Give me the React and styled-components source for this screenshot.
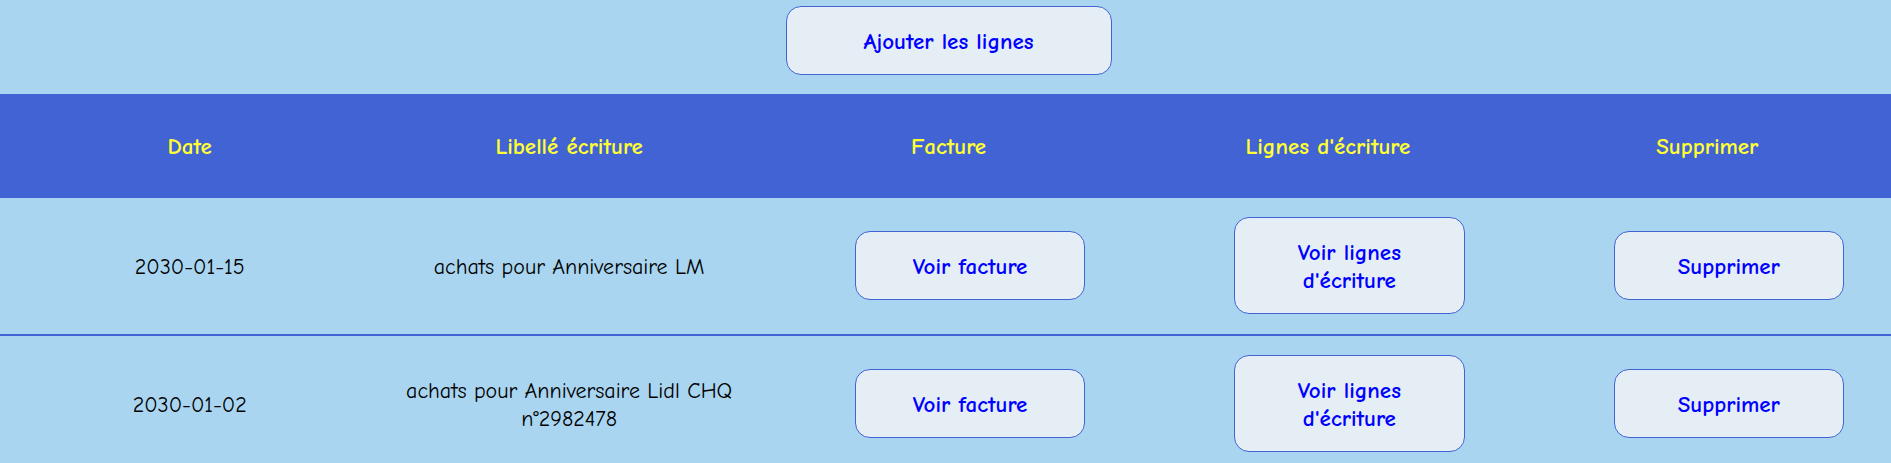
import React from "react";
import styled, { createGlobalStyle } from "styled-components";

const GlobalStyle = createGlobalStyle`
  *, *::before, *::after { box-sizing: border-box; }
  body {
    margin: 0;
    overflow: hidden;
    background: #a9d5f0;
    color: #000;
    font-family: "Comic Sans MS", "Comic Neue", "Noto Sans", sans-serif;
    font-size: 22px;
    line-height: 28px;
  }
`;

const Page = styled.main`
  width: calc(100% + 6px);
  padding-top: 6px;
`;

const Toolbar = styled.div`
  display: flex;
  justify-content: center;
  margin-bottom: 19px;
`;

const Button = styled.button`
  display: block;
  width: ${({ $width }) => $width || "100%"};
  padding: 21px 40px 18px;
  border: 1px solid #4263d4;
  border-radius: 15px;
  background: #e5eef5;
  color: #0000ff;
  font: inherit;
  font-size: 23px;
  font-weight: 700;
  text-align: center;
  cursor: pointer;
`;

const Table = styled.table`
  width: 100%;
  table-layout: fixed;
  border-collapse: separate;
  border-spacing: 0;
  text-align: center;
`;

const HeadCell = styled.th`
  padding: 39px 20px 37px;
  background: #4263d4;
  color: #ffff33;
  font-size: 23px;
  font-weight: 700;
`;

const Cell = styled.td`
  padding: 20px 20px 18px;
  border-bottom: 2px solid #4263d4;
`;

const ActionCell = styled(Cell)`
  padding: 19px 53px 20px 96px;
`;

const columns = ["Date", "Libellé écriture", "Facture", "Lignes d'écriture", "Supprimer"];

const entries = [
  { date: "2030-01-15", label: "achats pour Anniversaire LM" },
  { date: "2030-01-02", label: "achats pour Anniversaire Lidl CHQ n°2982478" },
];

export default function App() {
  return (
    <>
      <GlobalStyle />
      <Page>
        <Toolbar>
          <Button type="button" $width="326px">Ajouter les lignes</Button>
        </Toolbar>
        <Table>
          <thead>
            <tr>
              {columns.map((name) => (
                <HeadCell key={name} scope="col">{name}</HeadCell>
              ))}
            </tr>
          </thead>
          <tbody>
            {entries.map(({ date, label }) => (
              <tr key={date}>
                <Cell>{date}</Cell>
                <Cell>{label}</Cell>
                <ActionCell><Button type="button">Voir facture</Button></ActionCell>
                <ActionCell><Button type="button">Voir lignes d'écriture</Button></ActionCell>
                <ActionCell><Button type="button">Supprimer</Button></ActionCell>
              </tr>
            ))}
          </tbody>
        </Table>
      </Page>
    </>
  );
}
